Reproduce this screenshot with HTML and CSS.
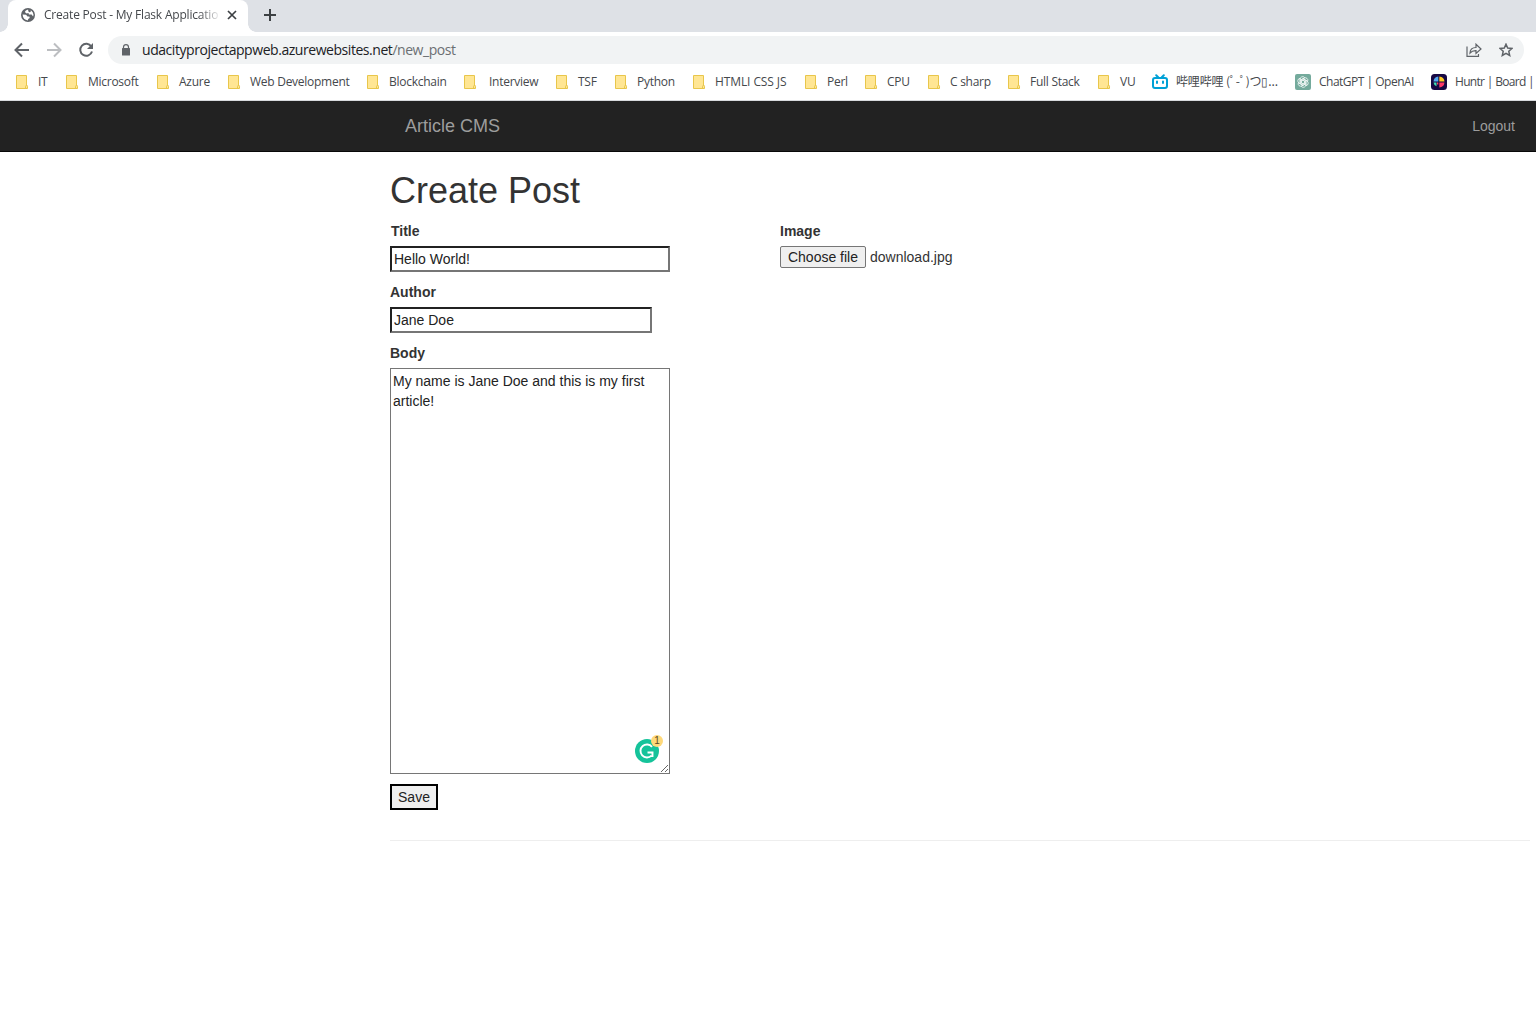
FILE: index.html
```html
<!DOCTYPE html>
<html lang="en">
<head>
<meta charset="utf-8">
<title>Create Post - My Flask Application</title>
<link rel="stylesheet" href="styles.css">
</head>
<body>
<svg class="defs" aria-hidden="true">
  <symbol id="folder" viewBox="0 0 13 15"><path fill="#ffe694" stroke="#e8c64b" d="M.5.5h10v10.2q1-.6 1 .6v2.2H.5z"/><path fill="none" stroke="#e8c64b" d="M9.5 13.5v-2q0-1 1-1"/></symbol>
</svg>
<header class="browser">
  <div class="tabs">
    <div class="tab">
      <svg class="globe" viewBox="0 0 14 14"><circle cx="7" cy="7" r="7" fill="#5f6368"/><path fill="#fff" d="M7.1 1.5Q4.200 2 3.800 4l1.800 1.400 1.900-.3.4 1.400 2.700.1 1.500 1.800.4-1.600Q12.300 3.700 9.800 2.200L9.600 4 8 4.200 7.300 3zM1.600 6.600l3.500.2 1.400 1.800h1.900l.3 1.300-1.500 1-.3 1.500Q2 12.200 1.600 6.600z"/></svg>
      <span class="tab-title">Create Post - My Flask Applicatio</span>
      <svg class="close" viewBox="0 0 10 10"><path d="M1 1l8 8M9 1L1 9"/></svg>
    </div>
    <svg class="plus" viewBox="0 0 12 12"><path d="M6 0v12M0 6h12"/></svg>
  </div>
  <div class="toolbar">
    <svg class="nav" viewBox="0 0 16 16"><path d="M15 8H2M8 1.500L1.500 8 8 14.500"/></svg>
    <svg class="nav off" viewBox="0 0 16 16"><path d="M1 8h13M8 1.500L14.500 8 8 14.500"/></svg>
    <svg class="nav" viewBox="0 0 16 16"><path d="M13.300 4.500A6 6 0 1 0 14 9.500"/><path class="solid" d="M15 1v6H9z"/></svg>
    <div class="address">
      <svg class="lock" viewBox="0 0 10 12"><path fill="#5f6368" d="M1.500 4h7q.5 0 .5.500v6.500q0 .5-.5.500h-7q-.5 0-.5-.5V4.500q0-.5.5-.5z"/><path d="M2.500 5V3Q2.600.6 5 .6T7.500 3v2" fill="none" stroke="#5f6368" stroke-width="1.200"/></svg>
      <span class="url">udacityprojectappweb.azurewebsites.net<span class="path">/new_post</span></span>
      <svg class="share" viewBox="0 0 16 14"><path d="M1 3.500v9.800h11.500V11M4 10q.2-5.500 6-5.500V1.200L15 6l-5 4.500V7.600Q6.300 7.400 4 10z"/></svg>
      <svg class="star" viewBox="0 0 14 14"><path d="M7 1.200l1.700 3.900 4.300.4-3.200 2.800.9 4.200L7 10.300l-3.700 2.200.9-4.200L1 5.500l4.300-.4z"/></svg>
    </div>
  </div>
  <nav class="bookmarks">
    <a><svg class="folder"><use href="#folder"/></svg><span>IT</span></a>
    <a><svg class="folder"><use href="#folder"/></svg><span>Microsoft</span></a>
    <a><svg class="folder"><use href="#folder"/></svg><span>Azure</span></a>
    <a><svg class="folder"><use href="#folder"/></svg><span>Web Development</span></a>
    <a><svg class="folder"><use href="#folder"/></svg><span>Blockchain</span></a>
    <a class="wide"><svg class="folder"><use href="#folder"/></svg><span>Interview</span></a>
    <a><svg class="folder"><use href="#folder"/></svg><span>TSF</span></a>
    <a><svg class="folder"><use href="#folder"/></svg><span>Python</span></a>
    <a class="loose"><svg class="folder"><use href="#folder"/></svg><span>HTMLI CSS JS</span></a>
    <a><svg class="folder"><use href="#folder"/></svg><span>Perl</span></a>
    <a><svg class="folder"><use href="#folder"/></svg><span>CPU</span></a>
    <a><svg class="folder"><use href="#folder"/></svg><span>C sharp</span></a>
    <a><svg class="folder"><use href="#folder"/></svg><span>Full Stack</span></a>
    <a><svg class="folder"><use href="#folder"/></svg><span>VU</span></a>
    <a class="site"><svg class="favicon" viewBox="0 0 16 16"><path d="M4.200 1.200l2 2M11.800 1.200l-2 2M3 4h10q2 0 2 2v6q0 2-2 2H3q-2 0-2-2V6q0-2 2-2zM5 7.500v1.500M11 7.500v1.500" fill="none" stroke="#00a1d6" stroke-width="2" stroke-linecap="round"/></svg><span class="bili">哔哩哔哩 (ﾟ-ﾟ)つ▯...</span></a>
    <a class="site tight"><svg class="favicon" viewBox="0 0 16 16"><rect width="16" height="16" rx="2" fill="#74aa9c"/><g fill="none" stroke="#fff" stroke-width=".7"><path id="petal" d="M5.200 9.500V5.100a2.500 2.500 0 0 1 4.500-1.500L6.500 5.500v4"/><use href="#petal" transform="rotate(60 8 8)"/><use href="#petal" transform="rotate(120 8 8)"/><use href="#petal" transform="rotate(180 8 8)"/><use href="#petal" transform="rotate(240 8 8)"/><use href="#petal" transform="rotate(300 8 8)"/></g></svg><span>ChatGPT | OpenAI</span></a>
    <a class="site tighter"><svg class="favicon" viewBox="0 0 16 16"><rect width="16" height="16" rx="3.500" fill="#170843"/><path fill="#53a7ee" d="M7.300 2.500v5H2.500q.3-4.300 4.800-5z"/><path fill="#ffcb22" d="M8.300 2.500q4.800.5 5.200 5H8.300z"/><path fill="#ff3867" d="M8.300 8.500h5.200q-.5 4.500-5.200 5z"/><path fill="#43dbb0" d="M2.500 8.500h3v3.700q-2.700-1-3-3.700z"/><path fill="#ff3867" d="M6 8.500h1.300v2H6z"/></svg><span>Huntr | Board |</span></a>
  </nav>
</header>
<nav class="navbar"><a class="brand">Article CMS</a><a class="logout">Logout</a></nav>
<main class="content">
  <h1>Create Post</h1>
  <form class="form">
    <div class="fields">
      <label class="title-label" for="title">Title</label>
      <input class="text title" id="title" value="Hello World!">
      <label for="author">Author</label>
      <input class="text author" id="author" value="Jane Doe">
      <label for="body">Body</label>
      <div class="editor">
        <textarea id="body" spellcheck="false">My name is Jane Doe and this is my first article!</textarea>
        <div class="assistant">
          <svg viewBox="0 0 24 24"><circle cx="12" cy="12" r="12" fill="#15c39a"/><path d="M17 7.800A6.500 6.500 0 1 0 16.500 16.600M12.500 13.500h5M17.500 12.500v5.500" fill="none" stroke="#fff" stroke-width="1.900"/></svg>
          <span class="count">1</span>
        </div>
      </div>
      <button class="save" type="button">Save</button>
    </div>
    <div class="upload">
      <label>Image</label>
      <div class="file"><button type="button">Choose file</button><span>download.jpg</span></div>
    </div>
  </form>
  <hr>
</main>
</body>
</html>
```
FILE: styles.css
```css
* { box-sizing: border-box; }
body { margin: 0; height: 1027px; overflow: hidden; background: #fff; color: #333; font: 14px/20px "Liberation Sans", Arial, sans-serif; }
svg { display: block; flex: none; }
.defs { width: 0; height: 0; position: absolute; }
.browser { height: 101px; border-bottom: 1px solid #d8dadd; font-family: "Open Sans", "Noto Sans CJK SC", sans-serif; }
.tabs { display: flex; align-items: flex-start; height: 32px; background: #dee1e6; padding-left: 8px; }
.tab { position: relative; display: flex; align-items: center; width: 240px; height: 32px; padding: 0 11px 2px 13px; background: #fff; border-radius: 8px 8px 0 0; }
.tab::before, .tab::after { content: ""; position: absolute; bottom: 0; width: 8px; height: 8px; }
.tab::before { left: -8px; background: radial-gradient(circle at 0 0, transparent 7.5px, #fff 8px); }
.tab::after { right: -8px; background: radial-gradient(circle at 100% 0, transparent 7.5px, #fff 8px); }
.globe { width: 14px; height: 14px; }
.tab-title { width: 175px; margin-left: 9px; overflow: hidden; white-space: nowrap; font-size: 12px; letter-spacing: -.2px; color: #45484c; mask-image: linear-gradient(to right, #000 155px, transparent 177px); }
.close { width: 10px; height: 10px; margin-left: 8px; fill: none; stroke: #3c4043; stroke-width: 1.7; }
.plus { width: 12px; height: 12px; margin: 9px 0 0 16px; stroke: #3c4043; stroke-width: 2; }
.toolbar { display: flex; align-items: center; height: 36px; padding: 0 12px 0 14px; gap: 16px; }
.nav { width: 16px; height: 16px; fill: none; stroke: #5f6368; stroke-width: 2; }
.nav .solid { fill: #5f6368; stroke: none; }
.off { stroke: #bcbec1; }
.address { display: flex; flex: 1; align-items: center; height: 28px; margin-left: -2px; padding: 0 11px 0 13px; border-radius: 14px; background: #f1f3f4; }
.lock { width: 10px; height: 12px; }
.url { flex: 1; margin-left: 11px; font-size: 14px; letter-spacing: -.45px; color: #202124; white-space: nowrap; }
.path { color: #6b6f73; }
.share { width: 16px; height: 14px; margin-right: 17px; fill: none; stroke: #5f6368; stroke-width: 1.2; }
.star { width: 14px; height: 14px; fill: none; stroke: #5f6368; stroke-width: 1.5; }
.bookmarks { display: grid; grid-template-columns: 50px 91px 71px 139px 97px 92px 59px 78px 112px 60px 63px 80px 90px 54px 143px 136px 105px; height: 28px; padding-left: 16px; font-size: 12px; letter-spacing: -.27px; color: #45484c; }
.bookmarks a { display: flex; align-items: center; white-space: nowrap; }
.folder { width: 13px; height: 15px; margin-right: 9px; }
.wide .folder { margin-right: 12px; }
.loose { letter-spacing: -.1px; }
.tight { letter-spacing: -.5px; }
.tighter { letter-spacing: -.68px; }
.favicon { width: 16px; height: 16px; margin-right: 8px; }
.bili { font-family: "Noto Sans CJK SC", sans-serif; line-height: 16px; letter-spacing: -.15px; padding-bottom: 2px; }
.navbar { display: flex; align-items: center; justify-content: space-between; height: 51px; padding: 0 21px 0 405px; background: #222; border-bottom: 1px solid #080808; color: #9d9d9d; }
.brand { font-size: 18px; }
.content { padding: 19px 6px 0 390px; }
h1 { margin: 0 0 10px; font-size: 36px; font-weight: 400; line-height: 40px; }
.form { display: grid; grid-template-columns: 390px 1fr; }
.fields { display: flex; flex-direction: column; align-items: flex-start; }
label { display: block; margin-bottom: 5px; font-weight: 700; }
.title-label { padding-left: 1px; }
.text { height: 26px; margin: 0 0 10px; padding: 1px 2px; border: 2px inset #767676; border-radius: 0; background: #fff; font: 14px/20px "Liberation Sans", Arial, sans-serif; color: #222; }
.title { width: 280px; }
.author { width: 262px; }
.editor { position: relative; width: 280px; height: 406px; }
textarea { display: block; width: 280px; height: 406px; margin: 0; padding: 2px; border: 1px solid #767676; border-radius: 0; outline: none; font: 14px/20px "Liberation Sans", Arial, sans-serif; color: #222; }
.assistant { position: absolute; left: 245px; top: 371px; width: 24px; height: 24px; }
.count { position: absolute; left: 16px; top: -4px; width: 12px; height: 12px; border-radius: 50%; background: #ffd97a; color: #5b4a25; font: 10px/12px "Liberation Sans", Arial, sans-serif; text-align: center; }
.save { width: 48px; height: 26px; margin-top: 10px; padding: 0; border: 2px solid #000; background: #efefef; font: 14px/20px "Liberation Sans", Arial, sans-serif; color: #222; }
.file { display: flex; align-items: center; gap: 4px; height: 22px; }
.file button { width: 86px; height: 22px; padding: 0; border: 1px solid #767676; border-radius: 2px; background: #efefef; font: 14px/20px "Liberation Sans", Arial, sans-serif; color: #222; }
hr { margin: 30px 0 0; border: 0; border-top: 1px solid #eee; }
```
